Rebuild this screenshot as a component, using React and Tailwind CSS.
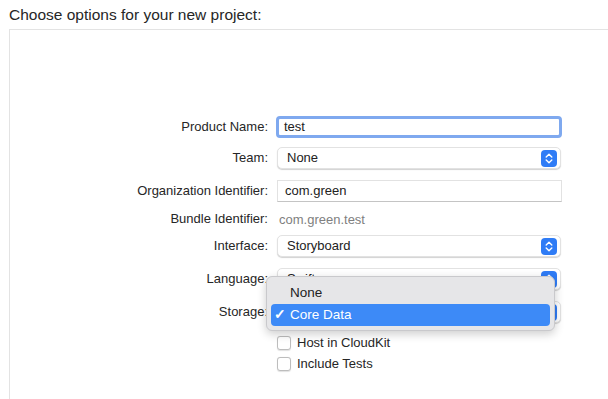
import React from "react";

function Stepper() {
  return (
    <div className="w-[16px] h-[17px] rounded-[4px] bg-[#2f7cf6] flex items-center justify-center">
      <svg width="8" height="11" viewBox="0 0 8 11" fill="none" stroke="white" strokeWidth="1.4" strokeLinecap="round" strokeLinejoin="round">
        <path d="M1.2 4 L4 1.3 L6.8 4" />
        <path d="M1.2 7 L4 9.7 L6.8 7" />
      </svg>
    </div>
  );
}

function Popup({ value }) {
  return (
    <div className="h-[22px] w-[284px] ml-[1px] rounded-[5px] bg-white border border-[#e2e2e2] shadow-[0_1px_1px_rgba(0,0,0,0.18)] flex items-center justify-between pl-[9px] pr-[3px]">
      <span className="text-[13px] text-[#222]">{value}</span>
      <Stepper />
    </div>
  );
}

function Row({ label, children, className }) {
  return (
    <div className={"grid grid-cols-[258px_285px] gap-x-[8px] items-center " + (className || "")}>
      <div className="text-right text-[13px] text-[#262626] whitespace-nowrap">{label}</div>
      <div>{children}</div>
    </div>
  );
}

function Check({ label, className }) {
  return (
    <div className={"grid grid-cols-[258px_285px] gap-x-[8px] items-center " + (className || "")}>
      <div />
      <div className="flex items-center gap-[6px] pl-[1px]">
        <div className="w-[14px] h-[14px] rounded-[3px] border border-[#bdbdbd] bg-white shadow-[0_0.5px_1px_rgba(0,0,0,0.12)]" />
        <span className="text-[13px] text-[#262626]">{label}</span>
      </div>
    </div>
  );
}

export default function App() {
  return (
    <div className="relative w-[608px] h-[399px] overflow-hidden bg-white" style={{ fontFamily: '"Liberation Sans", Arial, sans-serif' }}>
      <div className="pl-[9px] pt-[3px] h-[29px] text-[15.5px] text-[#262626]">Choose options for your new project:</div>
      <div className="ml-[9px] border-l border-t border-[#e3e3e3] h-[400px] pt-[86px]">
        <Row label="Product Name:" className="h-[22px]">
          <div className="h-[22px] w-[286px] rounded-[4px] border-[3px] border-[#7fa9ef] bg-white flex items-center pl-[5px]">
            <span className="text-[13px] text-[#222]">test</span>
          </div>
        </Row>
        <Row label="Team:" className="mt-[9px] h-[22px]">
          <Popup value="None" />
        </Row>
        <Row label="Organization Identifier:" className="mt-[11px] h-[22px]">
          <div className="h-[22px] w-[285px] ml-[1px] border border-[#e2e2e2] border-b-[#c4c4c4] bg-white flex items-center pl-[7px]">
            <span className="text-[13px] text-[#222]">com.green</span>
          </div>
        </Row>
        <Row label="Bundle Identifier:" className="mt-[5px] h-[16px]">
          <span className="text-[13px] text-[#808080] pl-[3px]">com.green.test</span>
        </Row>
        <Row label="Interface:" className="mt-[12px] h-[22px]">
          <Popup value="Storyboard" />
        </Row>
        <Row label="Language:" className="mt-[11px] h-[22px]">
          <Popup value="Swift" />
        </Row>
        <Row label="Storage:" className="mt-[11px] h-[22px]">
          <Popup value="Core Data" />
        </Row>
        <Check label="Host in CloudKit" className="mt-[10px] h-[14px]" />
        <Check label="Include Tests" className="mt-[7px] h-[14px]" />
      </div>

      <div className="absolute left-[266px] top-[276px] w-[289px] h-[55px] rounded-[6px] bg-[#e6e6e8] border border-[#c9c9cc] shadow-[0_3px_10px_rgba(0,0,0,0.2)] px-[4px] pt-[5px]">
        <div className="h-[22px] flex items-center pl-[19px] text-[13.5px] text-[#222]">None</div>
        <div className="h-[22px] rounded-[4px] bg-[#3d8af7] flex items-center pl-[3px] text-[13.5px] text-white">
          <span className="w-[16px] font-bold">✓</span>
          <span>Core Data</span>
        </div>
      </div>
    </div>
  );
}
